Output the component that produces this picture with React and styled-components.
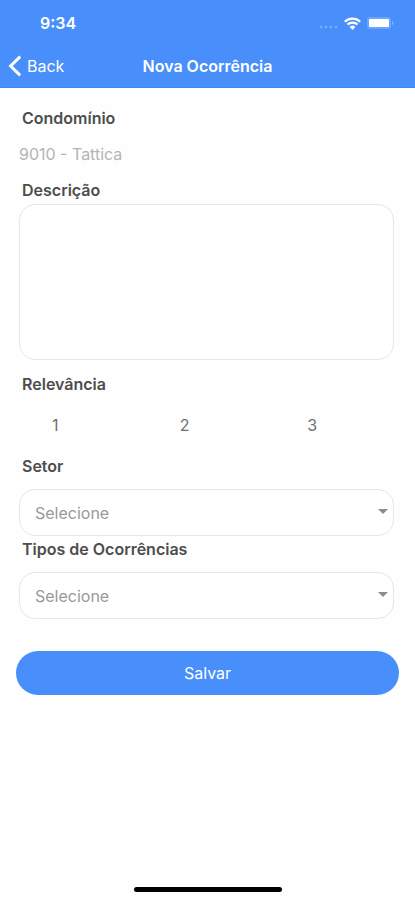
import React, { useState } from "react";
import styled, { createGlobalStyle } from "styled-components";

const GlobalStyle = createGlobalStyle`
  * {
    box-sizing: border-box;
  }

  body {
    margin: 0;
    background: #fefefe;
    color: #4d4d4d;
    font-family: Inter, "Liberation Sans", sans-serif;
    font-size: 16px;
    line-height: 20px;
  }

  button, input, select, textarea {
    font: inherit;
  }
`;

const Screen = styled.div`
  display: flex;
  flex-direction: column;
  min-height: 100vh;
`;

const Header = styled.header`
  background: #488ffc;
  color: #fff;
  border-bottom: 1px solid #4388f2;
`;

const StatusBar = styled.div`
  display: flex;
  align-items: center;
  justify-content: space-between;
  height: 44px;
  padding: 2px 21px 0 40px;
`;

const Clock = styled.span`
  font-weight: 600;
`;

const StatusIcons = styled.div`
  display: flex;
  align-items: center;
  gap: 6px;
`;

const NavBar = styled.nav`
  display: grid;
  grid-template-columns: 1fr auto 1fr;
  align-items: center;
  height: 43px;
  padding: 0 8px;
`;

const BackButton = styled.button`
  display: flex;
  align-items: center;
  justify-self: start;
  gap: 5px;
  padding: 0;
  border: none;
  background: none;
  color: #fff;
  cursor: pointer;
`;

const Title = styled.h1`
  margin: 0;
  font-size: 16px;
  font-weight: 600;
`;

const Form = styled.form`
  display: flex;
  flex-direction: column;
  padding: 20px 16px;
`;

const Field = styled.div`
  display: flex;
  flex-direction: column;
  gap: ${({ $gap }) => $gap}px;
  margin-bottom: ${({ $space }) => $space}px;
  padding: 0 5px 0 3px;
`;

const Label = styled.label`
  padding-left: 3px;
  font-weight: 600;
`;

const TextInput = styled.input`
  width: 100%;
  height: 20px;
  padding: 0;
  border: none;
  background: none;
  color: #b4b4b4;
  outline: none;
`;

const TextArea = styled.textarea`
  display: block;
  width: 100%;
  height: 156px;
  padding: 12px 15px;
  border: 1px solid #e6e6e6;
  border-radius: 16px;
  background: #fff;
  outline: none;
  resize: none;
`;

const RadioGroup = styled.fieldset`
  min-width: 0;
  margin: 0 0 21px;
  padding: 0;
  border: none;
`;

const Legend = styled.legend`
  margin-bottom: 21px;
  padding: 0 6px;
  font-weight: 600;
`;

const RadioRow = styled.div`
  display: grid;
  grid-template-columns: repeat(3, 1fr);
`;

const RadioLabel = styled.label`
  padding-left: 36px;
  color: ${({ $checked }) => ($checked ? "#488ffc" : "#707070")};
  cursor: pointer;
`;

const RadioInput = styled.input`
  position: absolute;
  opacity: 0;
  pointer-events: none;
`;

const SelectBox = styled.div`
  position: relative;
`;

const Select = styled.select`
  display: block;
  width: 100%;
  height: 47px;
  padding: 0 30px 0 15px;
  border: 1px solid #e6e6e6;
  border-radius: 16px;
  background: #fff;
  color: #999;
  outline: none;
  appearance: none;
`;

const Arrow = styled.svg`
  position: absolute;
  top: 20px;
  right: 6px;
  pointer-events: none;
`;

const SaveButton = styled.button`
  height: 44px;
  margin-top: 32px;
  border: none;
  border-radius: 22px;
  background: #488ffc;
  color: #fff;
  cursor: pointer;
`;

const HomeIndicator = styled.div`
  width: 148px;
  height: 5px;
  margin: auto auto 8px;
  border-radius: 3px;
  background: #000;
`;

const SignalIcon = () => (
  <svg width="19" height="14" viewBox="0 0 19 14" fill="#fff" opacity="0.28">
    <circle cx="2" cy="11" r="1.3" />
    <circle cx="7" cy="11" r="1.3" />
    <circle cx="12" cy="11" r="1.3" />
    <circle cx="17" cy="11" r="1.3" />
  </svg>
);

const WifiIcon = () => (
  <svg width="17" height="13" viewBox="0 0 16 12" fill="none" stroke="#fff" strokeWidth="2.1">
    <path d="M.8 4.3a10.3 10.3 0 0 1 14.4 0" />
    <path d="M3.3 7a6.700 6.700 0 0 1 9.400 0" />
    <path d="M8 12 5.300 9.200a3.900 3.900 0 0 1 5.400 0z" fill="#fff" stroke="none" />
  </svg>
);

const BatteryIcon = () => (
  <svg width="27" height="12" viewBox="0 0 27 12" fill="#fff">
    <rect width="24" height="12" rx="3" opacity="0.2" />
    <rect x="2" y="2" width="20" height="8" rx="1" />
    <path d="M25 4v4c.8-.3 1.4-1.1 1.4-2S25.8 4.3 25 4z" opacity="0.35" />
  </svg>
);

const ChevronIcon = () => (
  <svg width="14" height="22" viewBox="0 0 14 22" fill="none" stroke="#fff" strokeWidth="3">
    <path d="M12.2 1.6 2.6 11l9.6 9.4" />
  </svg>
);

const SelectField = ({ id, label, space }) => (
  <Field $gap={13} $space={space}>
    <Label htmlFor={id}>{label}</Label>
    <SelectBox>
      <Select id={id} defaultValue="">
        <option value="">Selecione</option>
      </Select>
      <Arrow width="10" height="5" viewBox="0 0 10 5" fill="#8c8c8c">
        <path d="M0 0h10L5 5z" />
      </Arrow>
    </SelectBox>
  </Field>
);

const App = () => {
  const [relevancia, setRelevancia] = useState(null);

  return (
    <Screen>
      <GlobalStyle />
      <Header>
        <StatusBar>
          <Clock>9:34</Clock>
          <StatusIcons>
            <SignalIcon />
            <WifiIcon />
            <BatteryIcon />
          </StatusIcons>
        </StatusBar>
        <NavBar>
          <BackButton type="button">
            <ChevronIcon />
            Back
          </BackButton>
          <Title>Nova Ocorrência</Title>
        </NavBar>
      </Header>
      <Form onSubmit={(e) => e.preventDefault()}>
        <Field $gap={16} $space={16}>
          <Label htmlFor="condominio">Condomínio</Label>
          <TextInput id="condominio" type="text" value="9010 - Tattica" readOnly />
        </Field>
        <Field $gap={4} $space={14}>
          <Label htmlFor="descricao">Descrição</Label>
          <TextArea id="descricao" />
        </Field>
        <RadioGroup>
          <Legend>Relevância</Legend>
          <RadioRow>
            {[1, 2, 3].map((n) => (
              <RadioLabel key={n} $checked={relevancia === n}>
                <RadioInput
                  type="radio"
                  name="relevancia"
                  checked={relevancia === n}
                  onChange={() => setRelevancia(n)}
                />
                {n}
              </RadioLabel>
            ))}
          </RadioRow>
        </RadioGroup>
        <SelectField id="setor" label="Setor" space={3} />
        <SelectField id="tipos" label="Tipos de Ocorrências" space={0} />
        <SaveButton type="submit">Salvar</SaveButton>
      </Form>
      <HomeIndicator />
    </Screen>
  );
};

export default App;
